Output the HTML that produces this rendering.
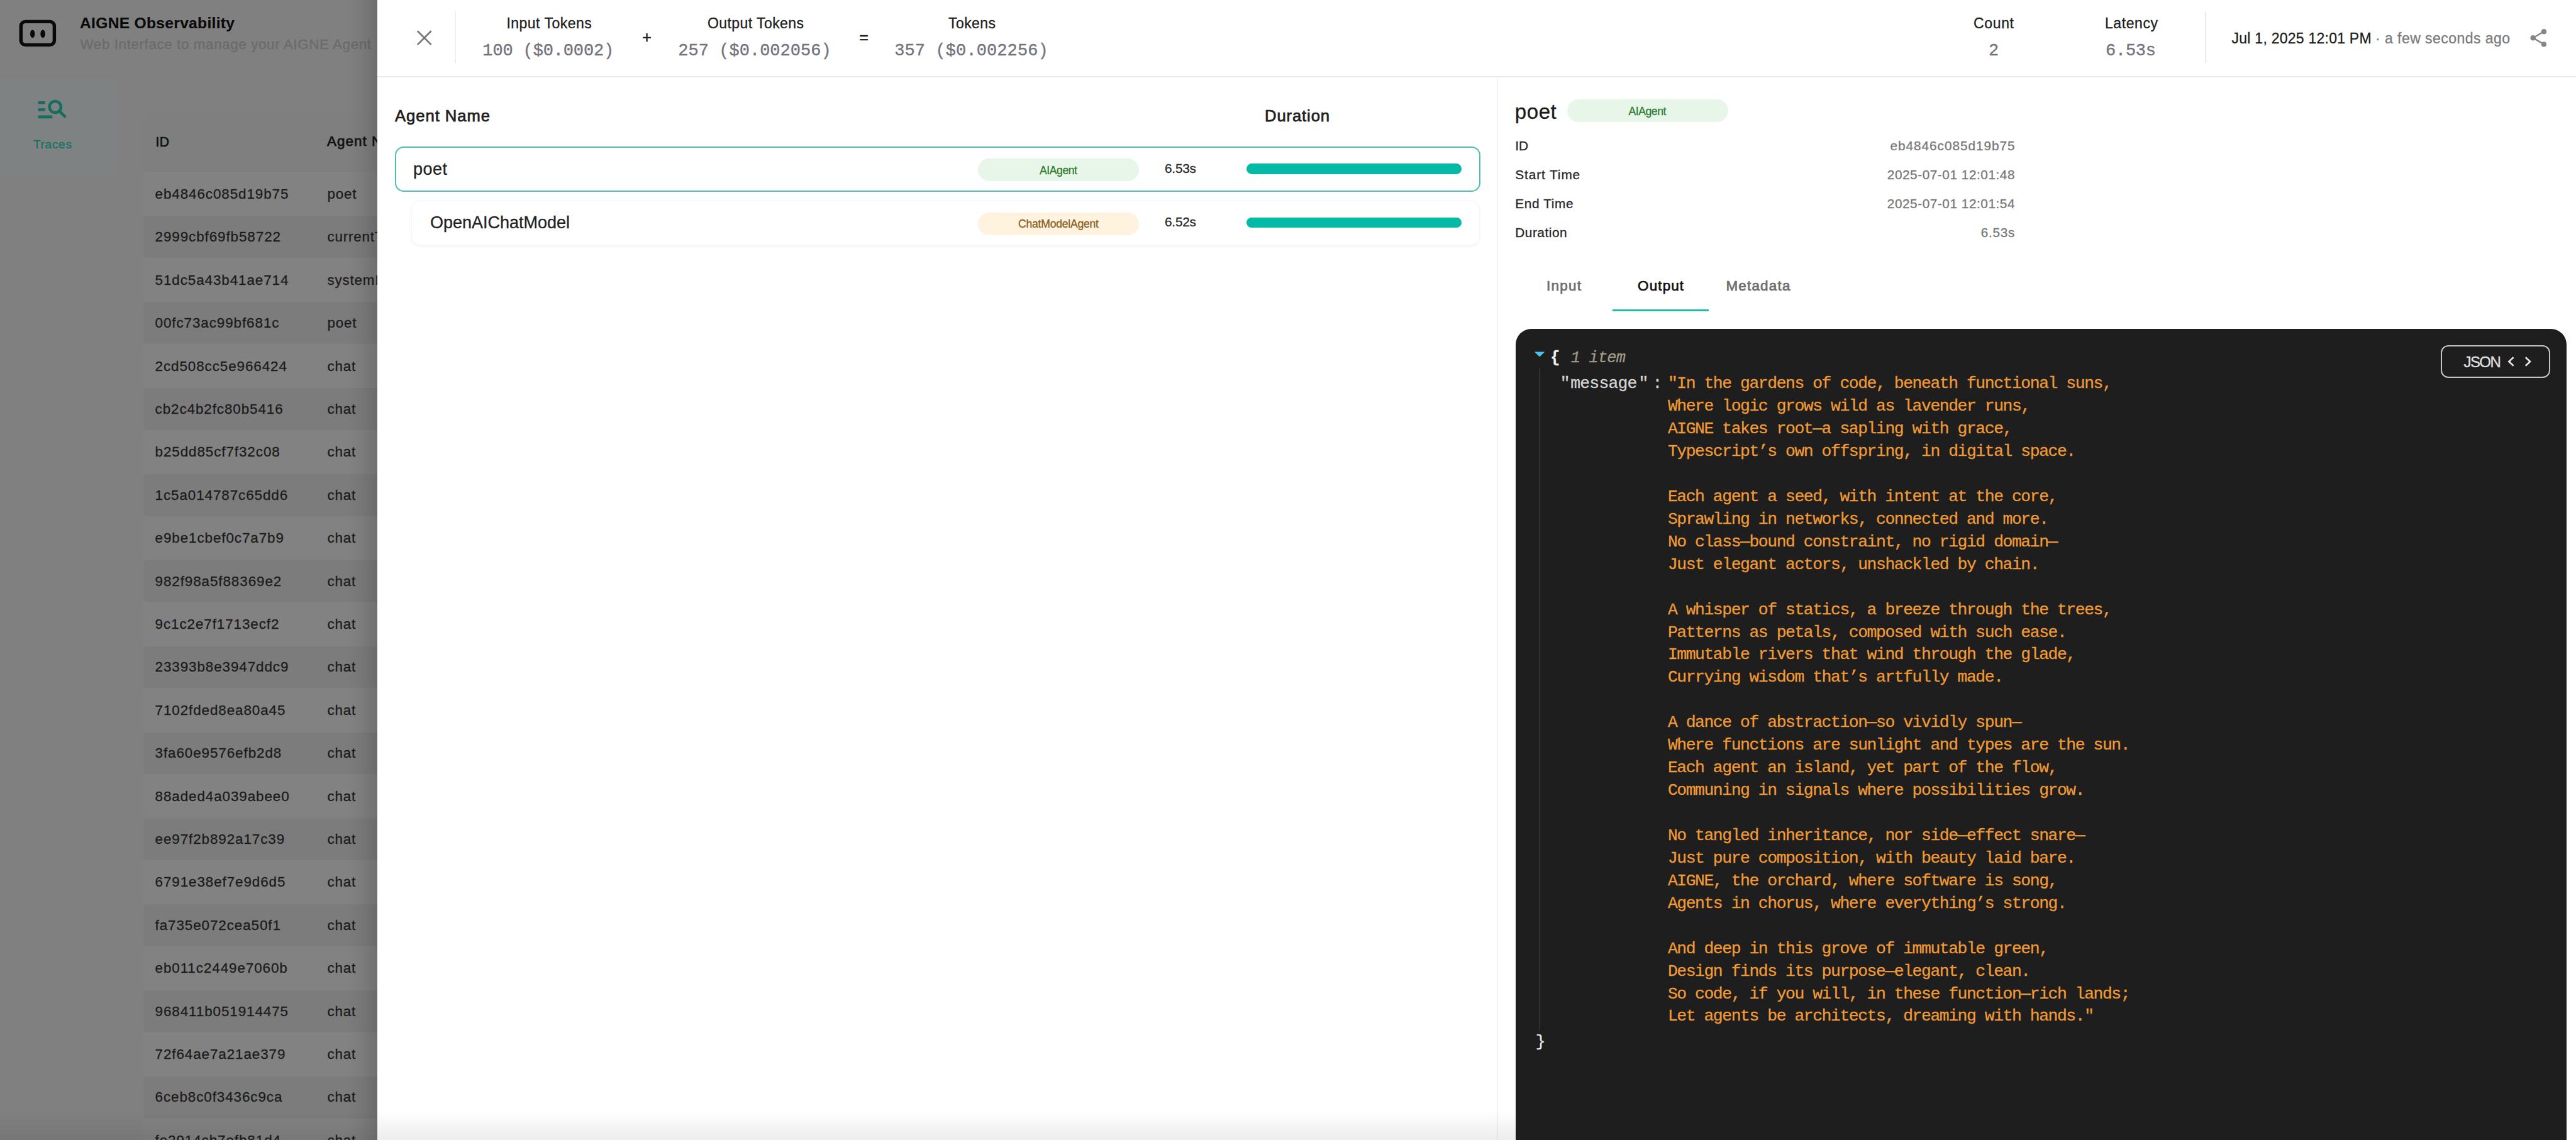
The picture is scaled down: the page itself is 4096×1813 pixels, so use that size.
<!DOCTYPE html>
<html><head><meta charset="utf-8"><title>AIGNE Observability</title>
<style>
html,body{margin:0;padding:0}
body{width:4096px;height:1813px;overflow:hidden;position:relative;background:#808080;font-family:"Liberation Sans",sans-serif}
.t{position:absolute;white-space:pre;line-height:1;font-family:"Liberation Sans",sans-serif;-webkit-text-stroke-width:0.3px}
.a{position:absolute}
#bg{position:absolute;left:0;top:0;width:600px;height:1813px;overflow:hidden}
#dr{position:absolute;left:600px;top:0;width:3496px;height:1813px;background:#fff}
#fg{position:absolute;left:0;top:0;width:4096px;height:1813px;overflow:hidden}
.stripe{position:absolute;left:228px;width:400px;height:66.5px;background:#7c7c7c;border-radius:5px 0 0 5px}
</style></head><body>
<div id="bg">
<div class="a" style="left:0;top:125px;width:185px;height:156px;background:#7e8282;border-radius:0 12px 12px 0"></div>
<div class="a" style="left:228px;top:176.6px;width:400px;height:1700px;background:#828282;border-radius:12px 0 0 0"></div>
<div class="a" style="left:228px;top:176.6px;width:400px;height:96.5px;background:#7f7f7f;border-radius:12px 0 0 0"></div>
<!-- table stripes -->
<div class="stripe" style="top:343.5px"></div><div class="stripe" style="top:480.4px"></div><div class="stripe" style="top:617.2px"></div><div class="stripe" style="top:754.0px"></div><div class="stripe" style="top:890.9px"></div><div class="stripe" style="top:1027.8px"></div><div class="stripe" style="top:1164.6px"></div><div class="stripe" style="top:1301.4px"></div><div class="stripe" style="top:1438.3px"></div><div class="stripe" style="top:1575.1px"></div><div class="stripe" style="top:1712.0px"></div>
<!-- logo -->
<svg class="a" style="left:20px;top:20px" width="90" height="70" viewBox="20 20 90 70"><rect x="33.3" y="34.4" width="53.1" height="37" rx="7" fill="none" stroke="#090909" stroke-width="5.4"/><ellipse cx="51.7" cy="53.7" rx="3.7" ry="6.3" fill="#090909"/><ellipse cx="68.1" cy="53.7" rx="3.8" ry="6.3" fill="#090909"/></svg>
<!-- traces icon -->
<svg class="a" style="left:56.3px;top:145.1px" width="54.5" height="54.5" viewBox="0 0 24 24"><path fill="#166c5d" d="M7 9H2V7h5zm0 3H2v2h5zm13.59 7-3.83-3.83c-.8.52-1.74.83-2.76.83-2.76 0-5-2.24-5-5s2.24-5 5-5 5 2.24 5 5c0 1.02-.31 1.96-.83 2.75L22 17.59zM17 11c0-1.65-1.35-3-3-3s-3 1.35-3 3 1.35 3 3 3 3-1.35 3-3M2 19h10v-2H2z"/></svg>
<div class="t" style="left:127.00px;top:25.18px;font-size:24.6px;color:#0a0a0a;font-weight:bold;letter-spacing:0.303px;-webkit-text-stroke-width:0.15px;">AIGNE Observability</div>
<div class="t" style="left:127.50px;top:60.04px;font-size:22.4px;color:#6b6b6b;letter-spacing:0.604px;">Web Interface to manage your AIGNE Agent</div>
<div class="t" style="left:53.00px;top:220.25px;font-size:19.2px;color:#187263;letter-spacing:0.613px;">Traces</div>
<div class="t" style="left:247.60px;top:215.35px;font-size:21.2px;color:#121212;-webkit-text-stroke-width:0.7px;letter-spacing:0.3px;">ID</div>
<div class="t" style="left:520.00px;top:214.34px;font-size:22.4px;color:#121212;letter-spacing:1.059px;-webkit-text-stroke-width:0.75px;">Agent Name</div>
<div class="t" style="left:246.50px;top:297.94px;font-size:22.4px;color:#1b1b1b;letter-spacing:0.93px;">eb4846c085d19b75</div>
<div class="t" style="left:520.50px;top:297.94px;font-size:22.4px;color:#1b1b1b;letter-spacing:0.8px;">poet</div>
<div class="t" style="left:246.50px;top:366.34px;font-size:22.4px;color:#1b1b1b;letter-spacing:0.93px;">2999cbf69fb58722</div>
<div class="t" style="left:520.50px;top:366.34px;font-size:22.4px;color:#1b1b1b;letter-spacing:0.8px;">currentTime</div>
<div class="t" style="left:246.50px;top:434.74px;font-size:22.4px;color:#1b1b1b;letter-spacing:0.93px;">51dc5a43b41ae714</div>
<div class="t" style="left:520.50px;top:434.74px;font-size:22.4px;color:#1b1b1b;letter-spacing:0.8px;">systemInfo</div>
<div class="t" style="left:246.50px;top:503.14px;font-size:22.4px;color:#1b1b1b;letter-spacing:0.93px;">00fc73ac99bf681c</div>
<div class="t" style="left:520.50px;top:503.14px;font-size:22.4px;color:#1b1b1b;letter-spacing:0.8px;">poet</div>
<div class="t" style="left:246.50px;top:571.54px;font-size:22.4px;color:#1b1b1b;letter-spacing:0.93px;">2cd508cc5e966424</div>
<div class="t" style="left:520.50px;top:571.54px;font-size:22.4px;color:#1b1b1b;letter-spacing:0.8px;">chat</div>
<div class="t" style="left:246.50px;top:639.94px;font-size:22.4px;color:#1b1b1b;letter-spacing:0.93px;">cb2c4b2fc80b5416</div>
<div class="t" style="left:520.50px;top:639.94px;font-size:22.4px;color:#1b1b1b;letter-spacing:0.8px;">chat</div>
<div class="t" style="left:246.50px;top:708.34px;font-size:22.4px;color:#1b1b1b;letter-spacing:0.93px;">b25dd85cf7f32c08</div>
<div class="t" style="left:520.50px;top:708.34px;font-size:22.4px;color:#1b1b1b;letter-spacing:0.8px;">chat</div>
<div class="t" style="left:246.50px;top:776.74px;font-size:22.4px;color:#1b1b1b;letter-spacing:0.93px;">1c5a014787c65dd6</div>
<div class="t" style="left:520.50px;top:776.74px;font-size:22.4px;color:#1b1b1b;letter-spacing:0.8px;">chat</div>
<div class="t" style="left:246.50px;top:845.14px;font-size:22.4px;color:#1b1b1b;letter-spacing:0.93px;">e9be1cbef0c7a7b9</div>
<div class="t" style="left:520.50px;top:845.14px;font-size:22.4px;color:#1b1b1b;letter-spacing:0.8px;">chat</div>
<div class="t" style="left:246.50px;top:913.54px;font-size:22.4px;color:#1b1b1b;letter-spacing:0.93px;">982f98a5f88369e2</div>
<div class="t" style="left:520.50px;top:913.54px;font-size:22.4px;color:#1b1b1b;letter-spacing:0.8px;">chat</div>
<div class="t" style="left:246.50px;top:981.94px;font-size:22.4px;color:#1b1b1b;letter-spacing:0.93px;">9c1c2e7f1713ecf2</div>
<div class="t" style="left:520.50px;top:981.94px;font-size:22.4px;color:#1b1b1b;letter-spacing:0.8px;">chat</div>
<div class="t" style="left:246.50px;top:1050.34px;font-size:22.4px;color:#1b1b1b;letter-spacing:0.93px;">23393b8e3947ddc9</div>
<div class="t" style="left:520.50px;top:1050.34px;font-size:22.4px;color:#1b1b1b;letter-spacing:0.8px;">chat</div>
<div class="t" style="left:246.50px;top:1118.74px;font-size:22.4px;color:#1b1b1b;letter-spacing:0.93px;">7102fded8ea80a45</div>
<div class="t" style="left:520.50px;top:1118.74px;font-size:22.4px;color:#1b1b1b;letter-spacing:0.8px;">chat</div>
<div class="t" style="left:246.50px;top:1187.14px;font-size:22.4px;color:#1b1b1b;letter-spacing:0.93px;">3fa60e9576efb2d8</div>
<div class="t" style="left:520.50px;top:1187.14px;font-size:22.4px;color:#1b1b1b;letter-spacing:0.8px;">chat</div>
<div class="t" style="left:246.50px;top:1255.54px;font-size:22.4px;color:#1b1b1b;letter-spacing:0.93px;">88aded4a039abee0</div>
<div class="t" style="left:520.50px;top:1255.54px;font-size:22.4px;color:#1b1b1b;letter-spacing:0.8px;">chat</div>
<div class="t" style="left:246.50px;top:1323.94px;font-size:22.4px;color:#1b1b1b;letter-spacing:0.93px;">ee97f2b892a17c39</div>
<div class="t" style="left:520.50px;top:1323.94px;font-size:22.4px;color:#1b1b1b;letter-spacing:0.8px;">chat</div>
<div class="t" style="left:246.50px;top:1392.34px;font-size:22.4px;color:#1b1b1b;letter-spacing:0.93px;">6791e38ef7e9d6d5</div>
<div class="t" style="left:520.50px;top:1392.34px;font-size:22.4px;color:#1b1b1b;letter-spacing:0.8px;">chat</div>
<div class="t" style="left:246.50px;top:1460.74px;font-size:22.4px;color:#1b1b1b;letter-spacing:0.93px;">fa735e072cea50f1</div>
<div class="t" style="left:520.50px;top:1460.74px;font-size:22.4px;color:#1b1b1b;letter-spacing:0.8px;">chat</div>
<div class="t" style="left:246.50px;top:1529.14px;font-size:22.4px;color:#1b1b1b;letter-spacing:0.93px;">eb011c2449e7060b</div>
<div class="t" style="left:520.50px;top:1529.14px;font-size:22.4px;color:#1b1b1b;letter-spacing:0.8px;">chat</div>
<div class="t" style="left:246.50px;top:1597.54px;font-size:22.4px;color:#1b1b1b;letter-spacing:0.93px;">968411b051914475</div>
<div class="t" style="left:520.50px;top:1597.54px;font-size:22.4px;color:#1b1b1b;letter-spacing:0.8px;">chat</div>
<div class="t" style="left:246.50px;top:1665.94px;font-size:22.4px;color:#1b1b1b;letter-spacing:0.93px;">72f64ae7a21ae379</div>
<div class="t" style="left:520.50px;top:1665.94px;font-size:22.4px;color:#1b1b1b;letter-spacing:0.8px;">chat</div>
<div class="t" style="left:246.50px;top:1734.34px;font-size:22.4px;color:#1b1b1b;letter-spacing:0.93px;">6ceb8c0f3436c9ca</div>
<div class="t" style="left:520.50px;top:1734.34px;font-size:22.4px;color:#1b1b1b;letter-spacing:0.8px;">chat</div>
<div class="t" style="left:246.50px;top:1802.74px;font-size:22.4px;color:#1b1b1b;letter-spacing:0.93px;">fe2914cb7efb81d4</div>
<div class="t" style="left:520.50px;top:1802.74px;font-size:22.4px;color:#1b1b1b;letter-spacing:0.8px;">chat</div>
<!-- drawer shadow -->
<div class="a" style="left:552px;top:0;width:48px;height:1813px;background:linear-gradient(to right,rgba(0,0,0,0),rgba(0,0,0,0.045) 45%,rgba(0,0,0,0.14))"></div>
</div>
<div id="dr"></div>
<div id="fg">
<!-- header lines -->
<div class="a" style="left:600px;top:121.2px;width:3496px;height:1.8px;background:#eaeaf1"></div>
<div class="a" style="left:723.8px;top:19.3px;width:1.7px;height:80.7px;background:#e9e9ef"></div>
<div class="a" style="left:3506.2px;top:19.3px;width:1.7px;height:80.7px;background:#e9e9ef"></div>
<div class="a" style="left:2380.8px;top:122px;width:1.7px;height:1700px;background:#ebebf1"></div>
<!-- close X -->
<svg class="a" style="left:655px;top:40px" width="40" height="40" viewBox="655 40 40 40"><path d="M663.8 49.3 L685.6 71.1 M685.6 49.3 L663.8 71.1" stroke="#767676" stroke-width="2.7" fill="none"/></svg>
<!-- share -->
<svg class="a" style="left:4019.4px;top:42.8px" width="34.6" height="34.6" viewBox="0 0 24 24"><path fill="#858585" d="M18 16.08c-.76 0-1.44.3-1.96.77L8.91 12.7c.05-.23.09-.46.09-.7s-.04-.47-.09-.7l7.05-4.11c.54.5 1.25.81 2.04.81 1.66 0 3-1.34 3-3s-1.34-3-3-3-3 1.34-3 3c0 .24.04.47.09.7L8.04 9.81C7.5 9.31 6.79 9 6 9c-1.66 0-3 1.34-3 3s1.34 3 3 3c.79 0 1.5-.31 2.04-.81l7.12 4.16c-.05.21-.08.43-.08.65 0 1.61 1.31 2.92 2.92 2.92 1.61 0 2.92-1.31 2.92-2.92s-1.31-2.92-2.92-2.92"/></svg>
<!-- trace rows -->
<div class="a" style="left:627.6px;top:232.8px;width:1726.4px;height:72px;box-sizing:border-box;border:2.1px solid #52beaf;border-radius:14px"></div>
<div class="a" style="left:654px;top:318.7px;width:1699px;height:71.3px;box-sizing:border-box;border:1.6px solid #f5f5f5;border-radius:14px;box-shadow:0 2px 4px rgba(0,0,0,0.05)"></div>
<div class="a" style="left:1555px;top:252px;width:256px;height:36px;border-radius:18px;background:#e8f5e9"></div>
<div class="a" style="left:1555px;top:338.2px;width:256px;height:36px;border-radius:18px;background:#fff3e0"></div>
<div class="a" style="left:1982px;top:260px;width:342px;height:16.8px;border-radius:9px;background:#04baa6"></div>
<div class="a" style="left:1982px;top:345.6px;width:342px;height:16.8px;border-radius:9px;background:#04baa6"></div>
<!-- right pane -->
<div class="a" style="left:2491.7px;top:158.3px;width:256.3px;height:35.7px;border-radius:18px;background:#e8f5e9"></div>
<div class="a" style="left:2563.8px;top:492px;width:153.7px;height:3.4px;background:#1fbfa9"></div>
<div class="a" style="left:2409.7px;top:523.4px;width:1671px;height:1400px;border-radius:25px;background:#1e1e1e"></div>
<svg class="a" style="left:2430px;top:550px" width="40" height="30" viewBox="2430 550 40 30"><path d="M2439.8 559.5 H2456.3 L2448.05 567.5 Z" fill="#45c6e8"/></svg>
<div class="a" style="left:2447.7px;top:586.3px;width:1.7px;height:1052px;background:#4b4b4b"></div>
<div class="a" style="left:3880.8px;top:548.5px;width:174.7px;height:52.1px;box-sizing:border-box;border:2px solid #c4c4c4;border-radius:12px"></div>
<svg class="a" style="left:3980px;top:560px" width="60" height="30" viewBox="3980 560 60 30"><path d="M3996.6 568.2 L3989.4 575 L3996.6 581.8 M4015.8 568.2 L4023 575 L4015.8 581.8" stroke="#e4e4e4" stroke-width="2.7" fill="none"/></svg>
<div class="t" style="left:805.40px;top:25.83px;font-size:23px;color:#202020;letter-spacing:0.489px;">Input Tokens</div>
<div class="t" style="left:767.35px;top:67.70px;font-size:27px;color:#73737c;font-family:'Liberation Mono', monospace;letter-spacing:-0.145px;-webkit-text-stroke:0.35px #73737c;">100 ($0.0002)</div>
<div class="t" style="left:1021.20px;top:46.64px;font-size:25px;color:#202020;-webkit-text-stroke:0.5px #202020;">+</div>
<div class="t" style="left:1125.00px;top:25.83px;font-size:23px;color:#202020;letter-spacing:0.424px;">Output Tokens</div>
<div class="t" style="left:1078.25px;top:67.70px;font-size:27px;color:#73737c;font-family:'Liberation Mono', monospace;letter-spacing:0.032px;-webkit-text-stroke:0.35px #73737c;">257 ($0.002056)</div>
<div class="t" style="left:1366.20px;top:46.64px;font-size:25px;color:#202020;-webkit-text-stroke:0.5px #202020;">=</div>
<div class="t" style="left:1508.00px;top:25.83px;font-size:23px;color:#202020;letter-spacing:0.425px;">Tokens</div>
<div class="t" style="left:1422.25px;top:67.70px;font-size:27px;color:#73737c;font-family:'Liberation Mono', monospace;letter-spacing:0.104px;-webkit-text-stroke:0.35px #73737c;">357 ($0.002256)</div>
<div class="t" style="left:3138.00px;top:25.83px;font-size:23px;color:#202020;letter-spacing:0.656px;">Count</div>
<div class="t" style="left:3161.90px;top:67.70px;font-size:27px;color:#73737c;font-family:'Liberation Mono', monospace;-webkit-text-stroke:0.35px #73737c;">2</div>
<div class="t" style="left:3347.00px;top:25.83px;font-size:23px;color:#202020;letter-spacing:0.573px;">Latency</div>
<div class="t" style="left:3348.00px;top:67.70px;font-size:27px;color:#73737c;font-family:'Liberation Mono', monospace;letter-spacing:-0.254px;-webkit-text-stroke:0.35px #73737c;">6.53s</div>
<div class="t" style="left:3548.60px;top:49.83px;font-size:23px;color:#1c1c1c;letter-spacing:0.243px;">Jul 1, 2025 12:01 PM</div>
<div class="t" style="left:3777.00px;top:49.83px;font-size:23px;color:#7a7a7a;letter-spacing:0.453px;">· a few seconds ago</div>
<div class="t" style="left:628.00px;top:171.93px;font-size:25.6px;color:#1f1f1f;letter-spacing:0.970px;-webkit-text-stroke-width:0.75px;">Agent Name</div>
<div class="t" style="left:2011.00px;top:171.93px;font-size:25.6px;color:#1f1f1f;letter-spacing:0.893px;-webkit-text-stroke-width:0.75px;">Duration</div>
<div class="t" style="left:657.00px;top:255.54px;font-size:27px;color:#222;letter-spacing:0.479px;">poet</div>
<div class="t" style="left:684.00px;top:340.74px;font-size:27px;color:#222;letter-spacing:-0.010px;">OpenAIChatModel</div>
<div class="t" style="left:1653.00px;top:262.70px;font-size:17.6px;color:#2e7d32;letter-spacing:-0.435px;">AIAgent</div>
<div class="t" style="left:1619.00px;top:348.30px;font-size:17.6px;color:#8a5f1e;letter-spacing:-0.236px;">ChatModelAgent</div>
<div class="t" style="left:1852.00px;top:257.99px;font-size:20.8px;color:#2a2a2a;letter-spacing:-0.223px;">6.53s</div>
<div class="t" style="left:1852.00px;top:343.39px;font-size:20.8px;color:#2a2a2a;letter-spacing:-0.223px;">6.52s</div>
<div class="t" style="left:2408.80px;top:160.57px;font-size:33px;color:#1a1a1a;letter-spacing:0.589px;">poet</div>
<div class="t" style="left:2589.60px;top:168.90px;font-size:17.6px;color:#2e7d32;letter-spacing:-0.468px;">AIAgent</div>
<div class="t" style="left:2409.20px;top:221.69px;font-size:20.8px;color:#262626;">ID</div>
<div class="t" style="left:3005.50px;top:221.69px;font-size:20.8px;color:#777;letter-spacing:0.940px;">eb4846c085d19b75</div>
<div class="t" style="left:2409.20px;top:267.79px;font-size:20.8px;color:#262626;letter-spacing:0.915px;">Start Time</div>
<div class="t" style="left:3000.80px;top:267.79px;font-size:20.8px;color:#777;letter-spacing:0.532px;">2025-07-01 12:01:48</div>
<div class="t" style="left:2409.20px;top:313.89px;font-size:20.8px;color:#262626;letter-spacing:0.663px;">End Time</div>
<div class="t" style="left:3000.80px;top:313.89px;font-size:20.8px;color:#777;letter-spacing:0.532px;">2025-07-01 12:01:54</div>
<div class="t" style="left:2409.20px;top:359.99px;font-size:20.8px;color:#262626;letter-spacing:0.556px;">Duration</div>
<div class="t" style="left:3149.70px;top:359.99px;font-size:20.8px;color:#777;letter-spacing:0.727px;">6.53s</div>
<div class="t" style="left:2459.10px;top:443.84px;font-size:22.4px;color:#6e6e6e;letter-spacing:1.297px;-webkit-text-stroke-width:0.75px;">Input</div>
<div class="t" style="left:2604.10px;top:443.84px;font-size:22.4px;color:#111;letter-spacing:1.156px;-webkit-text-stroke-width:0.75px;">Output</div>
<div class="t" style="left:2744.40px;top:443.84px;font-size:22.4px;color:#6e6e6e;letter-spacing:1.234px;-webkit-text-stroke-width:0.75px;">Metadata</div>
<div class="t" style="left:3917.50px;top:564.48px;font-size:24px;color:#e2e2e2;letter-spacing:-1.572px;">JSON</div>
<div class="t" style="left:2465.28px;top:556.73px;font-size:25.4px;color:#ededed;font-family:'Liberation Mono', monospace;font-weight:bold;letter-spacing:-1.44px;">{</div>
<div class="t" style="left:2497.78px;top:556.88px;font-size:25.2px;color:#a09b86;font-family:'Liberation Mono', monospace;font-style:italic;letter-spacing:-0.72px;">1 item</div>
<div class="t" style="left:2480.78px;top:596.76px;font-size:26.4px;color:#d6d6d6;font-family:'Liberation Mono', monospace;letter-spacing:-1.44px;">&quot;</div>
<div class="t" style="left:2497.28px;top:596.76px;font-size:26.4px;color:#d6d6d6;font-family:'Liberation Mono', monospace;letter-spacing:-0.8px;">message</div>
<div class="t" style="left:2605.58px;top:596.76px;font-size:26.4px;color:#d6d6d6;font-family:'Liberation Mono', monospace;letter-spacing:-1.44px;">&quot;</div>
<div class="t" style="left:2627.58px;top:597.16px;font-size:26.4px;color:#d6d6d6;font-family:'Liberation Mono', monospace;letter-spacing:-1.44px;">:</div>
<div class="t" style="left:2651.88px;top:597.16px;font-size:26.4px;color:#f09a36;font-family:'Liberation Mono', monospace;letter-spacing:-1.44px;">&quot;In the gardens of code, beneath functional suns,</div>
<div class="t" style="left:2651.88px;top:633.10px;font-size:26.4px;color:#f09a36;font-family:'Liberation Mono', monospace;letter-spacing:-1.44px;">Where logic grows wild as lavender runs,</div>
<div class="t" style="left:2651.88px;top:669.04px;font-size:26.4px;color:#f09a36;font-family:'Liberation Mono', monospace;letter-spacing:-1.44px;">AIGNE takes root—a sapling with grace,</div>
<div class="t" style="left:2651.88px;top:704.98px;font-size:26.4px;color:#f09a36;font-family:'Liberation Mono', monospace;letter-spacing:-1.44px;">Typescript’s own offspring, in digital space.</div>
<div class="t" style="left:2651.88px;top:776.86px;font-size:26.4px;color:#f09a36;font-family:'Liberation Mono', monospace;letter-spacing:-1.44px;">Each agent a seed, with intent at the core,</div>
<div class="t" style="left:2651.88px;top:812.80px;font-size:26.4px;color:#f09a36;font-family:'Liberation Mono', monospace;letter-spacing:-1.44px;">Sprawling in networks, connected and more.</div>
<div class="t" style="left:2651.88px;top:848.74px;font-size:26.4px;color:#f09a36;font-family:'Liberation Mono', monospace;letter-spacing:-1.44px;">No class—bound constraint, no rigid domain—</div>
<div class="t" style="left:2651.88px;top:884.68px;font-size:26.4px;color:#f09a36;font-family:'Liberation Mono', monospace;letter-spacing:-1.44px;">Just elegant actors, unshackled by chain.</div>
<div class="t" style="left:2651.88px;top:956.56px;font-size:26.4px;color:#f09a36;font-family:'Liberation Mono', monospace;letter-spacing:-1.44px;">A whisper of statics, a breeze through the trees,</div>
<div class="t" style="left:2651.88px;top:992.50px;font-size:26.4px;color:#f09a36;font-family:'Liberation Mono', monospace;letter-spacing:-1.44px;">Patterns as petals, composed with such ease.</div>
<div class="t" style="left:2651.88px;top:1028.44px;font-size:26.4px;color:#f09a36;font-family:'Liberation Mono', monospace;letter-spacing:-1.44px;">Immutable rivers that wind through the glade,</div>
<div class="t" style="left:2651.88px;top:1064.38px;font-size:26.4px;color:#f09a36;font-family:'Liberation Mono', monospace;letter-spacing:-1.44px;">Currying wisdom that’s artfully made.</div>
<div class="t" style="left:2651.88px;top:1136.26px;font-size:26.4px;color:#f09a36;font-family:'Liberation Mono', monospace;letter-spacing:-1.44px;">A dance of abstraction—so vividly spun—</div>
<div class="t" style="left:2651.88px;top:1172.20px;font-size:26.4px;color:#f09a36;font-family:'Liberation Mono', monospace;letter-spacing:-1.44px;">Where functions are sunlight and types are the sun.</div>
<div class="t" style="left:2651.88px;top:1208.14px;font-size:26.4px;color:#f09a36;font-family:'Liberation Mono', monospace;letter-spacing:-1.44px;">Each agent an island, yet part of the flow,</div>
<div class="t" style="left:2651.88px;top:1244.08px;font-size:26.4px;color:#f09a36;font-family:'Liberation Mono', monospace;letter-spacing:-1.44px;">Communing in signals where possibilities grow.</div>
<div class="t" style="left:2651.88px;top:1315.96px;font-size:26.4px;color:#f09a36;font-family:'Liberation Mono', monospace;letter-spacing:-1.44px;">No tangled inheritance, nor side—effect snare—</div>
<div class="t" style="left:2651.88px;top:1351.90px;font-size:26.4px;color:#f09a36;font-family:'Liberation Mono', monospace;letter-spacing:-1.44px;">Just pure composition, with beauty laid bare.</div>
<div class="t" style="left:2651.88px;top:1387.84px;font-size:26.4px;color:#f09a36;font-family:'Liberation Mono', monospace;letter-spacing:-1.44px;">AIGNE, the orchard, where software is song,</div>
<div class="t" style="left:2651.88px;top:1423.78px;font-size:26.4px;color:#f09a36;font-family:'Liberation Mono', monospace;letter-spacing:-1.44px;">Agents in chorus, where everything’s strong.</div>
<div class="t" style="left:2651.88px;top:1495.66px;font-size:26.4px;color:#f09a36;font-family:'Liberation Mono', monospace;letter-spacing:-1.44px;">And deep in this grove of immutable green,</div>
<div class="t" style="left:2651.88px;top:1531.60px;font-size:26.4px;color:#f09a36;font-family:'Liberation Mono', monospace;letter-spacing:-1.44px;">Design finds its purpose—elegant, clean.</div>
<div class="t" style="left:2651.88px;top:1567.54px;font-size:26.4px;color:#f09a36;font-family:'Liberation Mono', monospace;letter-spacing:-1.44px;">So code, if you will, in these function—rich lands;</div>
<div class="t" style="left:2651.88px;top:1603.48px;font-size:26.4px;color:#f09a36;font-family:'Liberation Mono', monospace;letter-spacing:-1.44px;">Let agents be architects, dreaming with hands.&quot;</div>
<div class="t" style="left:2441.78px;top:1643.96px;font-size:26.4px;color:#e6e6e6;font-family:'Liberation Mono', monospace;letter-spacing:-1.44px;">}</div>
<!-- bottom fade -->
<div class="a" style="left:0;top:1766px;width:2410px;height:47px;background:linear-gradient(to bottom,rgba(0,0,0,0),rgba(0,0,0,0.075))"></div>
</div>
</body></html>
